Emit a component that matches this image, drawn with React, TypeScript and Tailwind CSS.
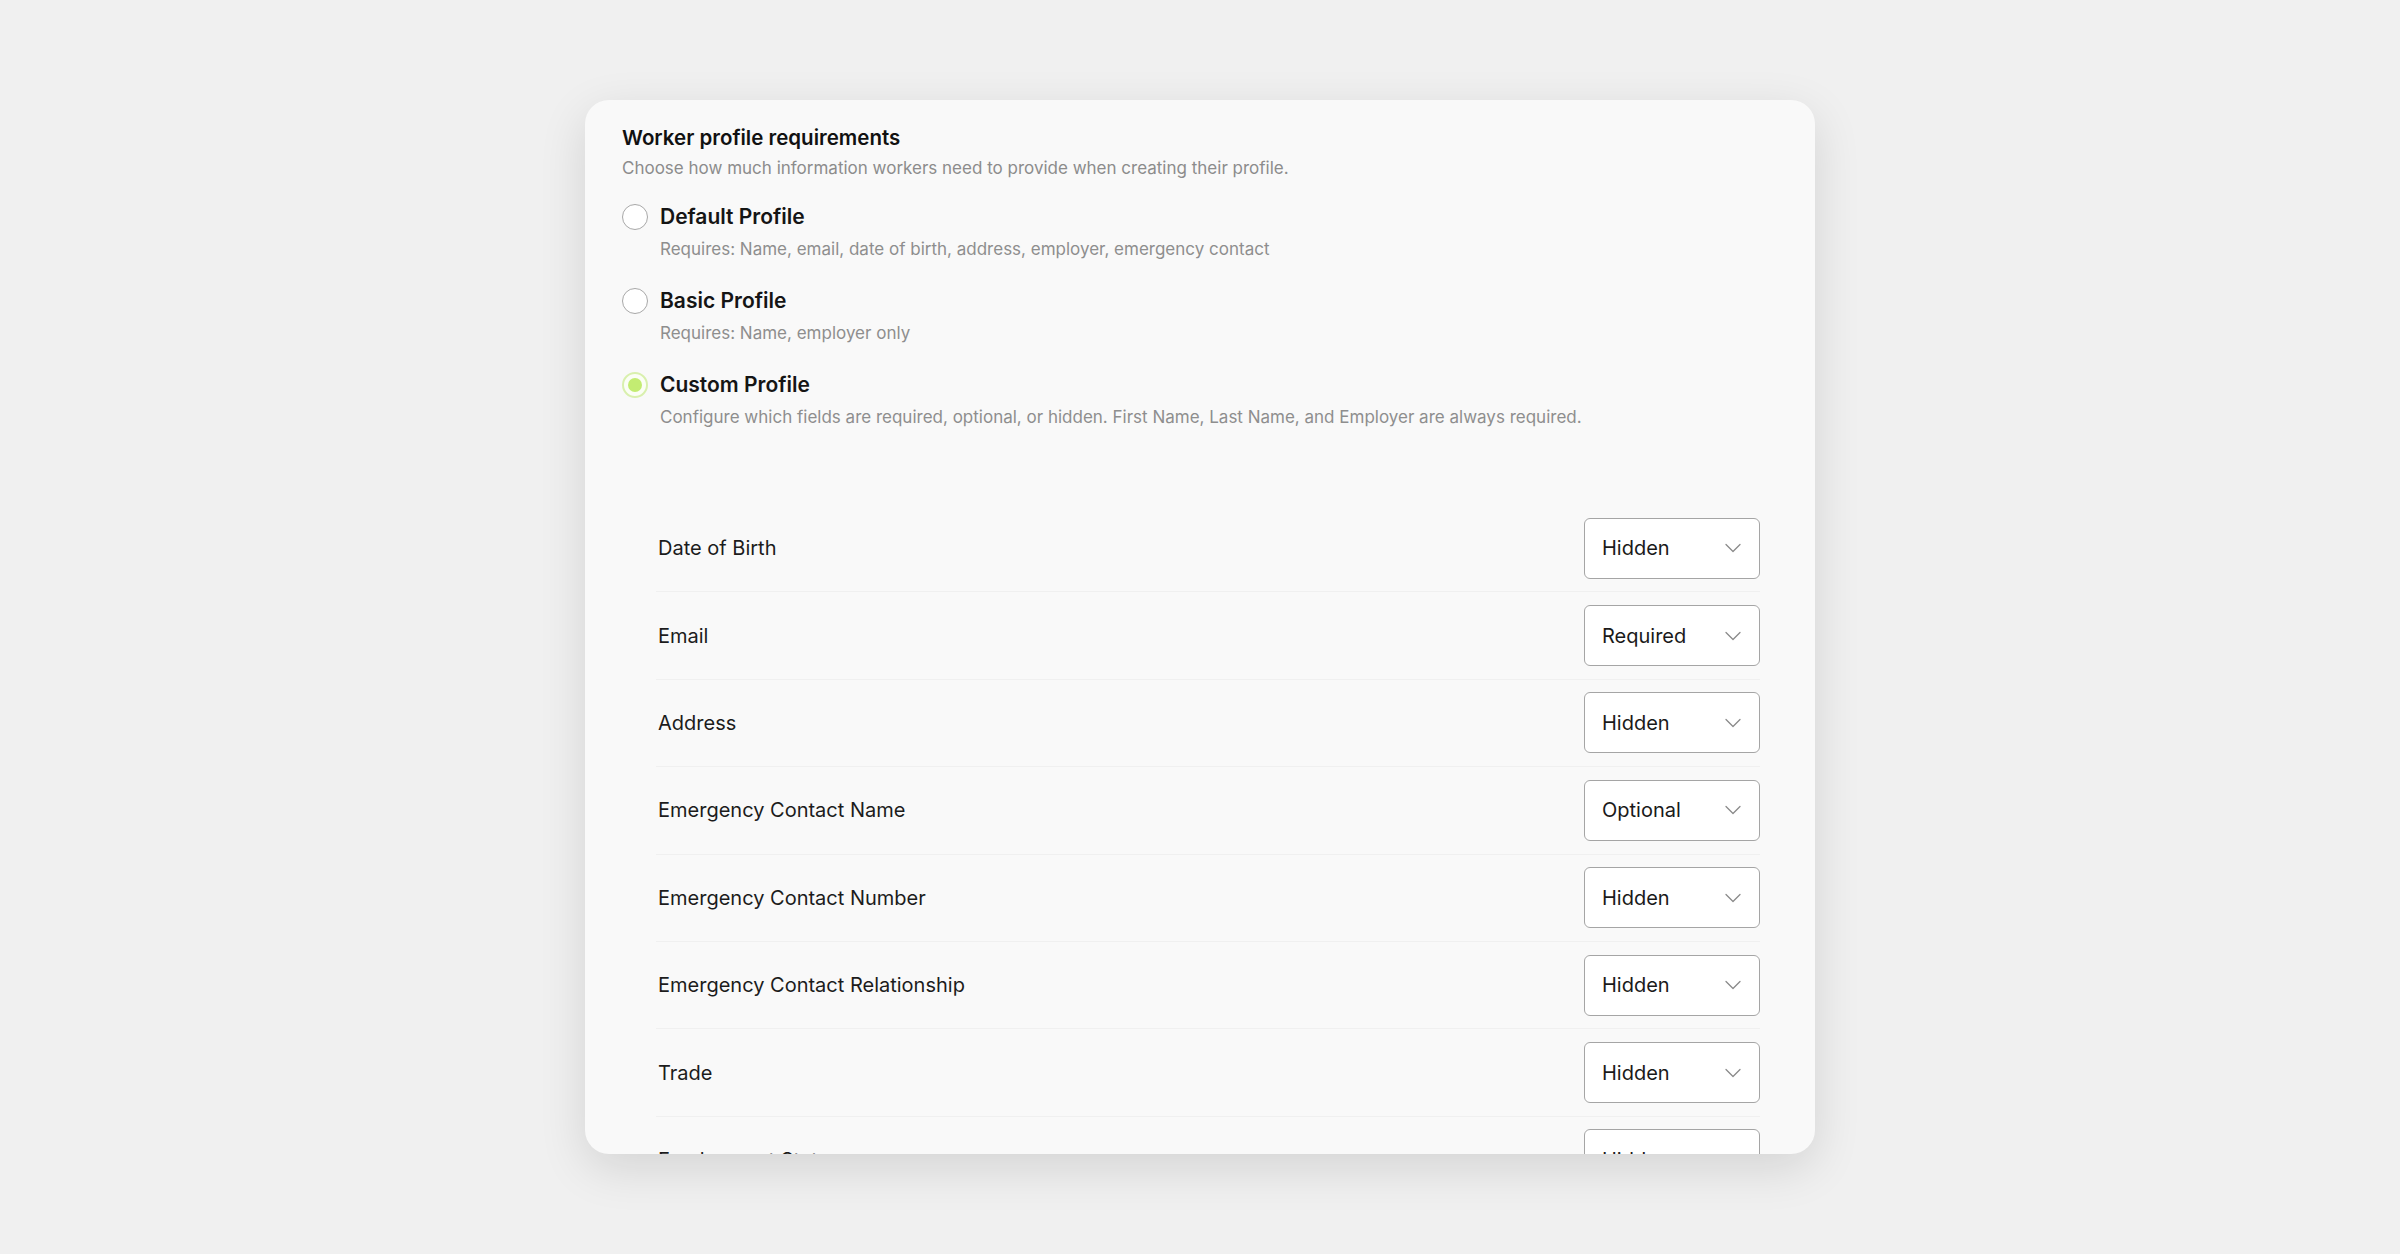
import React, { useState } from "react";
import { ChevronDown } from "lucide-react";

type Level = "Required" | "Optional" | "Hidden";

const profileOptions = [
  {
    id: "default",
    label: "Default Profile",
    desc: "Requires: Name, email, date of birth, address, employer, emergency contact",
  },
  {
    id: "basic",
    label: "Basic Profile",
    desc: "Requires: Name, employer only",
  },
  {
    id: "custom",
    label: "Custom Profile",
    desc: "Configure which fields are required, optional, or hidden. First Name, Last Name, and Employer are always required.",
  },
];

const fields: { name: string; level: Level }[] = [
  { name: "Date of Birth", level: "Hidden" },
  { name: "Email", level: "Required" },
  { name: "Address", level: "Hidden" },
  { name: "Emergency Contact Name", level: "Optional" },
  { name: "Emergency Contact Number", level: "Hidden" },
  { name: "Emergency Contact Relationship", level: "Hidden" },
  { name: "Trade", level: "Hidden" },
  { name: "Employment Status", level: "Hidden" },
];

function Radio({ checked }: { checked: boolean }) {
  if (checked) {
    return (
      <span className="w-[26px] h-[26px] rounded-full border-2 border-[#d9f0ae] bg-[#fbfef5] flex items-center justify-center shrink-0">
        <span className="w-[14px] h-[14px] rounded-full bg-[#c3ec72]" />
      </span>
    );
  }
  return <span className="w-[26px] h-[26px] rounded-full border-[1.5px] border-[#a8a8a8] bg-white shrink-0" />;
}

export default function App() {
  const [selected, setSelected] = useState("custom");

  return (
    <div
      className="min-h-screen bg-[#f0f0f0] flex justify-center pt-[100px]"
      style={{ fontFamily: "Inter, 'Noto Sans', sans-serif" }}
    >
      <div className="w-[1230px] h-[1054px] rounded-3xl overflow-hidden bg-[#f9f9f9] shadow-[0_14px_48px_rgba(0,0,0,0.12)] pl-[37px] pr-[37px] pt-6">
        <h2 className="text-[20.5px] leading-7 font-semibold text-[#111111]">Worker profile requirements</h2>
        <p className="mt-[3px] text-[17px] leading-[26px] text-[#8c8c8c]">
          Choose how much information workers need to provide when creating their profile.
        </p>

        <div className="mt-[22px] flex flex-col gap-[25px]">
          {profileOptions.map((opt) => (
            <div key={opt.id} className="cursor-pointer" onClick={() => setSelected(opt.id)}>
              <div className="flex items-center gap-3 h-7">
                <Radio checked={selected === opt.id} />
                <span className="text-[21px] font-semibold text-[#151515]">{opt.label}</span>
              </div>
              <p className="mt-[6px] pl-[38px] text-[17px] leading-[25px] text-[#8e8e8e]">{opt.desc}</p>
            </div>
          ))}
        </div>

        <div className="mt-[75px] ml-[34px] w-[1104px]">
          {fields.map((f) => (
            <div key={f.name} className="h-[87.4px] flex items-center justify-between border-b border-[#f0f0f0]">
              <span className="pl-[2px] text-[20px] text-[#1c1c1c]">{f.name}</span>
              <div className="w-[176px] h-[61px] rounded-md border border-[#a5a5a5] bg-white flex items-center justify-between pl-[17px] pr-[12px]">
                <span className="text-[20px] text-[#1a1a1a]">{f.level}</span>
                <ChevronDown size={28} strokeWidth={1.1} className="text-[#8a8a8a]" />
              </div>
            </div>
          ))}
        </div>
      </div>
    </div>
  );
}
